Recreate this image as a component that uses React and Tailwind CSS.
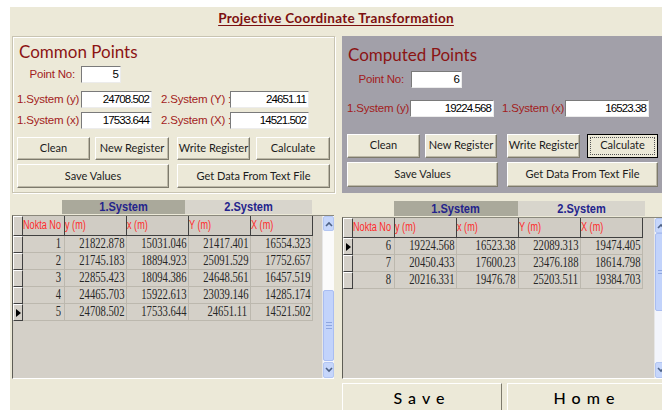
import React from 'react';

const comic = "font-['Comic_Sans_MS','Lato',sans-serif]";
const arial = "font-['Liberation_Sans',Arial,sans-serif]";
const times = "font-['Liberation_Serif','Times_New_Roman',serif]";

const btnBase = `flex items-center justify-center shrink-0 whitespace-nowrap bg-[#ece9d8] border border-t-white border-l-white border-r-[#7d7a6c] border-b-[#7d7a6c] shadow-[inset_-1px_-1px_0_#bdb9a8] text-[11px] text-[#1c1c1c] ${comic}`;
const inputBase = `shrink-0 h-[17px] bg-white border border-t-[#7a7a7a] border-l-[#7a7a7a] border-r-[#ececec] border-b-[#ececec] text-right pr-[2px] text-[11.5px] tracking-[-0.9px] leading-[15px] text-black whitespace-nowrap ${arial}`;
const labelText = `whitespace-nowrap text-[11.5px] tracking-[-0.2px] text-[#a31c1c] ${arial}`;

const leftRows = [
    ['1', '21822.878', '15031.046', '21417.401', '16554.323'],
    ['2', '21745.183', '18894.923', '25091.529', '17752.657'],
    ['3', '22855.423', '18094.386', '24648.561', '16457.519'],
    ['4', '24465.703', '15922.613', '23039.146', '14285.174'],
    ['5', '24708.502', '17533.644', '24651.11', '14521.502'],
];

const rightRows = [
    ['6', '19224.568', '16523.38', '22089.313', '19474.405'],
    ['7', '20450.433', '17600.23', '23476.188', '18614.798'],
    ['8', '20216.331', '19476.78', '25203.511', '19384.703'],
];

const headers = ['y (m)', 'x (m)', 'Y (m)', 'X (m)'];

const Chevron = ({ up }) => (
    <svg width="8" height="6" viewBox="0 0 8 6">
        <path d={up ? 'M1 5 L4 2 L7 5' : 'M1 1 L4 4 L7 1'} fill="none" stroke="#4d6185" strokeWidth="1.6" />
    </svg>
);

const ScrollBar = ({ variant }) => (
    <div className="w-[12px] shrink-0 flex flex-col bg-[#f7f8fb] border-l border-[#e6e6e6]">
        <div className="h-[15px] shrink-0 flex items-center justify-center bg-[#c6d6fb] border border-[#b3c6f3] rounded-[2px]">
            <Chevron up />
        </div>
        {variant === 'left' ? (
            <>
                <div className="h-[59px] shrink-0 bg-[#fbfbfb]"></div>
                <div className="h-[71px] shrink-0 flex flex-col items-center justify-center gap-[2px] bg-[#c2d3fb] border border-[#a9bdf2] rounded-[2px]">
                    <div className="w-[6px] h-px bg-[#8ea6e0]"></div>
                    <div className="w-[6px] h-px bg-[#8ea6e0]"></div>
                    <div className="w-[6px] h-px bg-[#8ea6e0]"></div>
                </div>
            </>
        ) : (
            <div className="h-[78px] shrink-0 flex flex-col items-center justify-center gap-[2px] bg-[#c2d3fb] border border-[#a9bdf2] rounded-[2px]">
                <div className="w-[6px] h-px bg-[#8ea6e0]"></div>
                <div className="w-[6px] h-px bg-[#8ea6e0]"></div>
            </div>
        )}
        <div className="flex-1 bg-[#f3f5fc]"></div>
        <div className="h-[16px] shrink-0 flex items-center justify-center bg-[#c6d6fb] border border-[#b3c6f3] rounded-[2px]">
            <Chevron />
        </div>
    </div>
);

// narrow the grid fonts the way the old grid control draws them
const Squeeze = ({ children, right }) => (
    <span className={`inline-block whitespace-nowrap scale-x-[0.76] ${right ? 'origin-right' : 'origin-left'}`}>{children}</span>
);

const DataGrid = ({ rows, current, variant, height }) => (
    <div className={`flex ${height} border-t border-l border-t-[#8a887c] border-l-[#5e5d55] border-b border-b-white`}>
        <div className="flex-1 bg-[#d4d0c8] overflow-hidden">
            {/* column header */}
            <div className={`flex h-[20px] ${arial}`}>
                <div className="w-[10px] shrink-0 bg-[#d4d0c8] border-t border-l border-t-white border-l-white border-r border-b border-r-[#404040] border-b-[#404040]"></div>
                <div className="w-[42px] shrink-0 overflow-hidden bg-[#d0ccc4] border-r border-b border-[#404040] text-[12px] leading-[18px] text-[#ff2a2a]">
                    <Squeeze>Nokta No</Squeeze>
                </div>
                {headers.map((h) => (
                    <div key={h} className="w-[62px] shrink-0 bg-[#d0ccc4] border-r border-b border-[#404040] text-[12px] leading-[18px] text-[#ff2a2a]">
                        <Squeeze>{h}</Squeeze>
                    </div>
                ))}
            </div>
            {rows.map((r, i) => (
                <div key={r[0]} className={`flex h-[17px] text-[14px] leading-[16px] text-[#262626] ${times}`}>
                    <div className="w-[10px] shrink-0 flex items-center justify-center bg-[#d4d0c8] border-t border-l border-t-white border-l-white border-r border-b border-r-[#404040] border-b-[#404040]">
                        {i === current && (
                            <div className="w-0 h-0 border-y-[4px] border-y-transparent border-l-[5px] border-l-black"></div>
                        )}
                    </div>
                    <div className="w-[42px] shrink-0 border-r border-b border-[#bcb8ae] text-right pr-[3px]">
                        <Squeeze right>{r[0]}</Squeeze>
                    </div>
                    {r.slice(1).map((v, j) => (
                        <div key={j} className="w-[62px] shrink-0 border-r border-b border-[#bcb8ae] text-right pr-[3px]">
                            <Squeeze right>{v}</Squeeze>
                        </div>
                    ))}
                </div>
            ))}
        </div>
        <ScrollBar variant={variant} />
    </div>
);

const App = () => {
    return (
        <div className="w-[662px] h-[410px] bg-white overflow-hidden">
            <div className="ml-[10px] mt-[7px] h-[403px] bg-[#ece9d8] flex flex-col">
                {/* title */}
                <div className="h-[29px] shrink-0 flex justify-center pt-[3px]">
                    <span className={`text-[13.5px] font-bold leading-[16px] text-[#7d1010] underline underline-offset-2 tracking-[0.3px] ${comic}`}>
                        Projective Coordinate Transformation
                    </span>
                </div>

                {/* point panels */}
                <div className="flex h-[157px] shrink-0 pl-[2px] gap-[7px]">
                    <div className="w-[323px] shrink-0 border border-[#c8c4b2] shadow-[inset_1px_1px_0_white,1px_1px_0_white] flex flex-col">
                        <div className={`mt-[5px] pl-[6px] h-[20px] text-[17px] leading-[20px] text-[#8b1414] ${comic}`}>Common Points</div>
                        <div className="flex items-center mt-[4px]">
                            <div className={`w-[68px] shrink-0 text-right pr-[6px] ${labelText}`}>Point No:</div>
                            <div className={`w-[40px] ${inputBase}`}>5</div>
                        </div>
                        <div className="flex items-center mt-[8px]">
                            <div className={`w-[68px] shrink-0 pl-[4px] ${labelText}`}>1.System (y)</div>
                            <div className={`w-[71px] ${inputBase}`}>24708.502</div>
                            <div className={`w-[78px] shrink-0 pl-[9px] ${labelText}`}>2.System (Y) :</div>
                            <div className={`w-[79px] ${inputBase}`}>24651.11</div>
                        </div>
                        <div className="flex items-center mt-[3px]">
                            <div className={`w-[68px] shrink-0 pl-[4px] ${labelText}`}>1.System (x)</div>
                            <div className={`w-[71px] ${inputBase}`}>17533.644</div>
                            <div className={`w-[78px] shrink-0 pl-[9px] ${labelText}`}>2.System (X) :</div>
                            <div className={`w-[79px] ${inputBase}`}>14521.502</div>
                        </div>
                        <div className="flex mt-[8px] pl-[4px] h-[23px]">
                            <button className={`w-[73px] ${btnBase}`}>Clean</button>
                            <button className={`w-[74px] ml-[5px] ${btnBase}`}>New Register</button>
                            <button className={`w-[73px] ml-[8px] ${btnBase}`}>Write Register</button>
                            <button className={`w-[74px] ml-[6px] ${btnBase}`}>Calculate</button>
                        </div>
                        <div className="flex mt-[4px] pl-[4px] h-[24px]">
                            <button className={`w-[152px] ${btnBase}`}>Save Values</button>
                            <button className={`w-[153px] ml-[8px] ${btnBase}`}>Get Data From Text File</button>
                        </div>
                    </div>

                    <div className="flex-1 bg-[#a2a0a9] flex flex-col">
                        <div className={`mt-[9px] pl-[6px] h-[20px] text-[17px] leading-[20px] text-[#8b1414] ${comic}`}>Computed Points</div>
                        <div className="flex items-center mt-[6px]">
                            <div className={`w-[69px] shrink-0 text-right pr-[7px] ${labelText}`}>Point No:</div>
                            <div className={`w-[51px] ${inputBase}`}>6</div>
                        </div>
                        <div className="flex items-center mt-[12px]">
                            <div className={`w-[68px] shrink-0 pl-[5px] ${labelText}`}>1.System (y)</div>
                            <div className={`w-[84px] ${inputBase}`}>19224.568</div>
                            <div className={`w-[71px] shrink-0 pl-[8px] ${labelText}`}>1.System (x)</div>
                            <div className={`w-[84px] ${inputBase}`}>16523.38</div>
                        </div>
                        <div className="flex mt-[16px] pl-[5px] h-[24px]">
                            <button className={`w-[73px] ${btnBase}`}>Clean</button>
                            <button className={`w-[72px] ml-[5px] ${btnBase}`}>New Register</button>
                            <button className={`w-[73px] ml-[10px] ${btnBase}`}>Write Register</button>
                            <button className={`w-[71px] ml-[7px] shrink-0 flex items-center justify-center bg-[#ece9d8] border border-black p-[2px] text-[11px] text-[#1c1c1c] ${comic}`}>
                                <span className="w-full h-full flex items-center justify-center border border-dotted border-[#555]">Calculate</span>
                            </button>
                        </div>
                        <div className="flex mt-[4px] pl-[5px] h-[25px]">
                            <button className={`w-[151px] ${btnBase}`}>Save Values</button>
                            <button className={`w-[151px] ml-[9px] ${btnBase}`}>Get Data From Text File</button>
                        </div>
                    </div>
                </div>

                {/* coordinate tables */}
                <div className="flex mt-[5px] pl-[2px] gap-[8px]">
                    <div className="w-[322px] shrink-0 flex flex-col">
                        <div className={`flex ml-[50px] mt-[2px] h-[14px] text-[13px] font-bold leading-[14px] text-[#23238c] ${arial}`}>
                            <div className="w-[123px] bg-[#aaa99b] text-center"><span className="inline-block scale-x-[0.85]">1.System</span></div>
                            <div className="w-[127px] bg-[#d8d5cc] text-center"><span className="inline-block scale-x-[0.85]">2.System</span></div>
                        </div>
                        <div className="mt-[1px]">
                            <DataGrid rows={leftRows} current={4} variant="left" height="h-[164px]" />
                        </div>
                    </div>

                    <div className="w-[324px] shrink-0 flex flex-col">
                        <div className={`flex ml-[52px] mt-[3px] h-[15px] text-[13px] font-bold leading-[15px] text-[#23238c] ${arial}`}>
                            <div className="w-[124px] bg-[#aaa99b] text-center"><span className="inline-block scale-x-[0.85]">1.System</span></div>
                            <div className="w-[127px] bg-[#d8d5cc] text-center"><span className="inline-block scale-x-[0.85]">2.System</span></div>
                        </div>
                        <div className="mt-[1px]">
                            <DataGrid rows={rightRows} current={0} variant="right" height="h-[162px]" />
                        </div>
                        <div className="flex mt-[4px] h-[30px]">
                            <button className={`w-[160px] shrink-0 bg-[#ece9d8] border border-t-white border-l-white border-r-[#7d7a6c] text-[16px] font-medium tracking-[6px] text-black ${comic}`}>Save</button>
                            <button className={`w-[160px] ml-[5px] shrink-0 bg-[#ece9d8] border border-t-white border-l-white border-r-[#7d7a6c] text-[16px] font-medium tracking-[6px] text-black ${comic}`}>Home</button>
                        </div>
                    </div>
                </div>
            </div>
        </div>
    );
};

export default App;
